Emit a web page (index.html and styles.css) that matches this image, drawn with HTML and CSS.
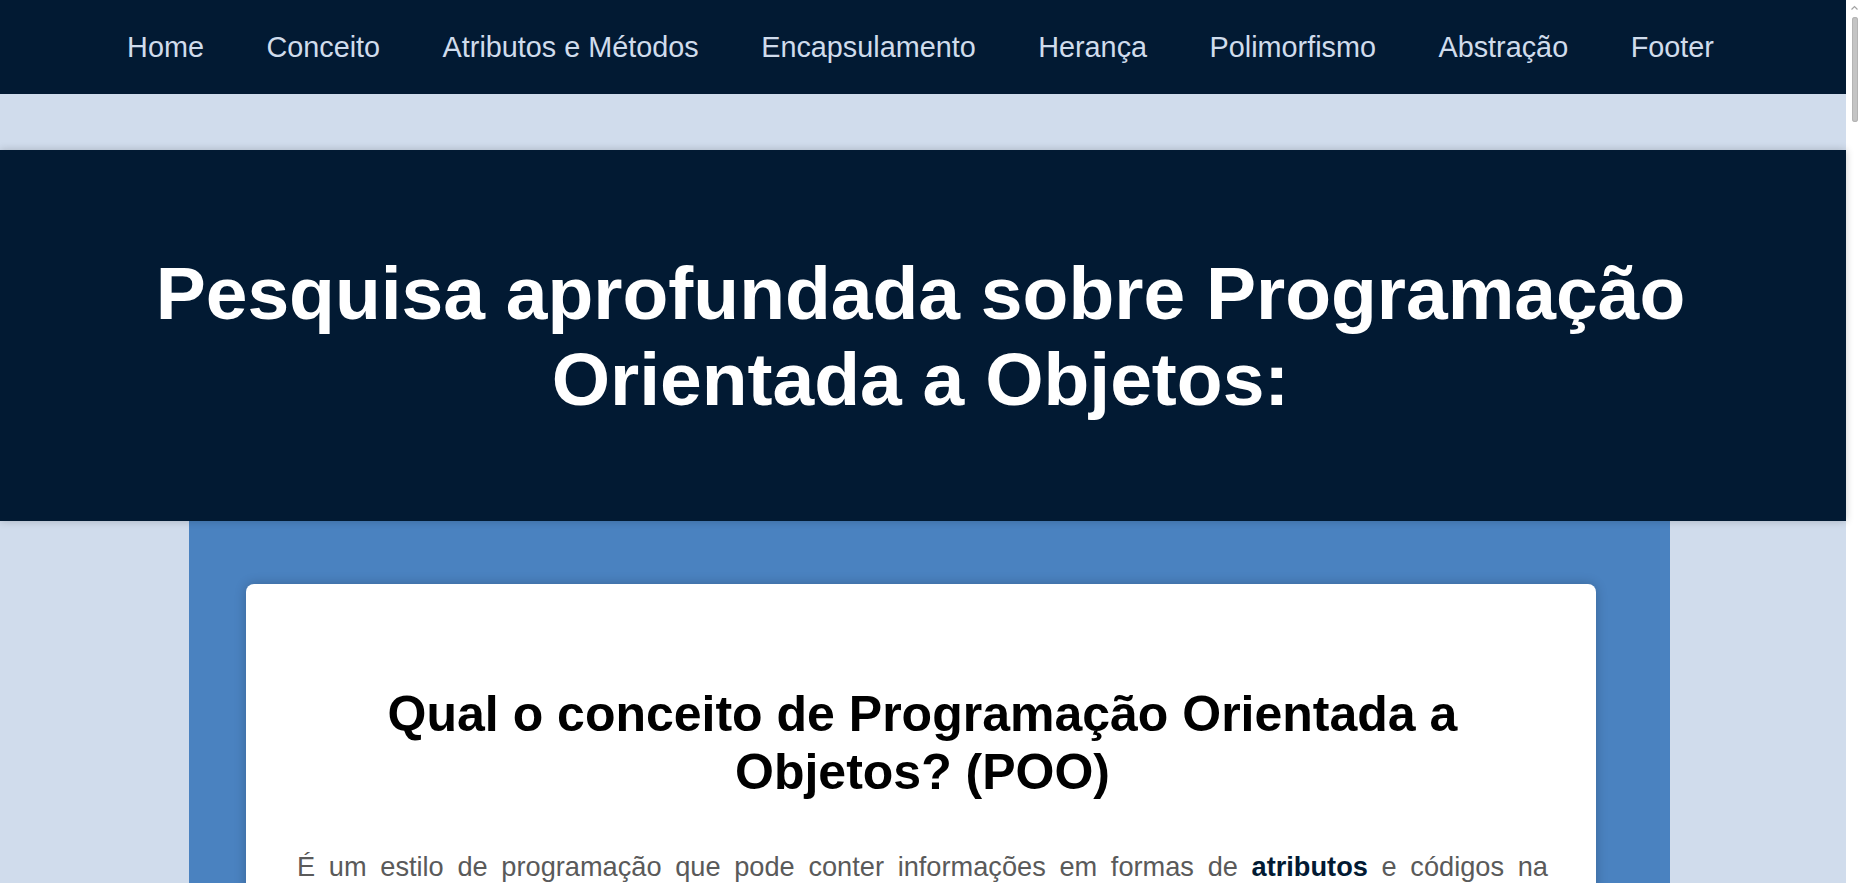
FILE: index.html
```html
<!DOCTYPE html>
<html lang="pt-BR">
<head>
<meta charset="utf-8">
<title>Programação Orientada a Objetos</title>
<link rel="stylesheet" href="styles.css">
</head>
<body>
<div class="page">
  <header class="topbar">
    <nav class="menu">
      <a href="#home">Home</a>
      <a href="#conceito">Conceito</a>
      <a href="#atributos">Atributos e Métodos</a>
      <a href="#encapsulamento">Encapsulamento</a>
      <a href="#heranca">Herança</a>
      <a href="#polimorfismo">Polimorfismo</a>
      <a href="#abstracao">Abstração</a>
      <a href="#footer">Footer</a>
    </nav>
  </header>

  <section class="hero" id="home">
    <h1 class="hero-title">Pesquisa aprofundada sobre Programação Orientada a Objetos:</h1>
  </section>

  <main class="content">
    <section class="card" id="conceito">
      <h2 class="card-title">Qual o conceito de Programação Orientada a Objetos? (POO)</h2>
      <p class="card-text">É um estilo de programação que pode conter informações em formas de <strong>atributos</strong> e códigos na forma de <strong>métodos</strong>. Nesse paradigma, o software é organizado em torno de objetos, que representam entidades do mundo real e reúnem dados e comportamentos em uma mesma estrutura.</p>
    </section>
    <section class="card" id="atributos">
      <h2 class="card-title">Atributos e Métodos</h2>
      <p class="card-text">Atributos são as características de um objeto, enquanto métodos são as ações que ele pode executar.</p>
    </section>
    <section class="card" id="encapsulamento">
      <h2 class="card-title">Encapsulamento</h2>
      <p class="card-text">O encapsulamento protege os dados internos de um objeto, permitindo o acesso apenas por meio de métodos definidos.</p>
    </section>
    <section class="card" id="heranca">
      <h2 class="card-title">Herança</h2>
      <p class="card-text">A herança permite que uma classe reaproveite atributos e métodos de outra classe.</p>
    </section>
    <section class="card" id="polimorfismo">
      <h2 class="card-title">Polimorfismo</h2>
      <p class="card-text">O polimorfismo permite que objetos de classes diferentes respondam à mesma mensagem de formas distintas.</p>
    </section>
    <section class="card" id="abstracao">
      <h2 class="card-title">Abstração</h2>
      <p class="card-text">A abstração consiste em representar apenas os aspectos essenciais de uma entidade.</p>
    </section>
  </main>

  <footer class="footer" id="footer">
    <p>Pesquisa sobre Programação Orientada a Objetos</p>
  </footer>
</div>

<aside class="rail" aria-hidden="true">
  <svg class="rail-arrow" width="17" height="17" viewBox="0 0 17 17">
    <path d="M5.5 9.5 L8.5 6.5 L11.5 9.5" fill="none" stroke="#a3a3a3" stroke-width="1.2"/>
  </svg>
  <div class="rail-thumb"></div>
</aside>
</body>
</html>
```

FILE: styles.css
```css
html {
  background: #d0dcec;
}

body {
  margin: 0;
  display: flex;
  align-items: stretch;
  background: #d0dcec;
  font-family: "Liberation Sans", Arial, sans-serif;
}

.page {
  flex: 1 1 auto;
  min-width: 0;
}

.rail {
  flex: 0 0 17px;
  background: #ffffff;
  display: flex;
  flex-direction: column;
  align-items: center;
}

.rail-arrow {
  display: block;
}

.rail-thumb {
  width: 6px;
  height: 105px;
  border-radius: 3px;
  background: #c4c4c4;
  box-shadow: inset 0 0 0 1px #b4b4b4;
}

.topbar {
  background: #021a33;
  height: 94px;
  display: flex;
  align-items: center;
  justify-content: center;
}

.menu {
  display: flex;
  gap: 62.5px;
  padding-right: 5px;
}

.menu a {
  color: #d0dcec;
  text-decoration: none;
  font-size: 28.8px;
}

.hero {
  position: relative;
  z-index: 1;
  margin-top: 56px;
  background: #021a33;
  padding: 100px 0 99px;
  box-shadow: 0 0 8px rgba(0, 0, 0, 0.2);
}

.hero-title {
  margin: 0;
  padding-right: 5px;
  color: #ffffff;
  font-size: 75px;
  font-weight: bold;
  text-align: center;
}

.content {
  margin: 0 176px 0 189px;
  background: #4a82c0;
  padding: 63px 74px 60px 57px;
  display: flex;
  flex-direction: column;
  gap: 60px;
  min-height: 6000px;
}

.card {
  background: #ffffff;
  border-radius: 8px;
  box-shadow: 0 0 12px rgba(0, 0, 0, 0.22);
  padding: 101px 48px 60px 51px;
}

.card-title {
  margin: 0 0 46px;
  color: #000000;
  font-size: 50px;
  font-weight: bold;
  text-align: center;
}

.card-text {
  margin: 0;
  color: #5a5a5a;
  font-size: 27.2px;
  line-height: 1.5;
  text-align: justify;
  word-spacing: 4px;
}

.card-text strong {
  color: #021a33;
}

.footer {
  background: #021a33;
  color: #d0dcec;
  text-align: center;
  padding: 40px 0;
  font-size: 20px;
}

.footer p {
  margin: 0;
}
```
